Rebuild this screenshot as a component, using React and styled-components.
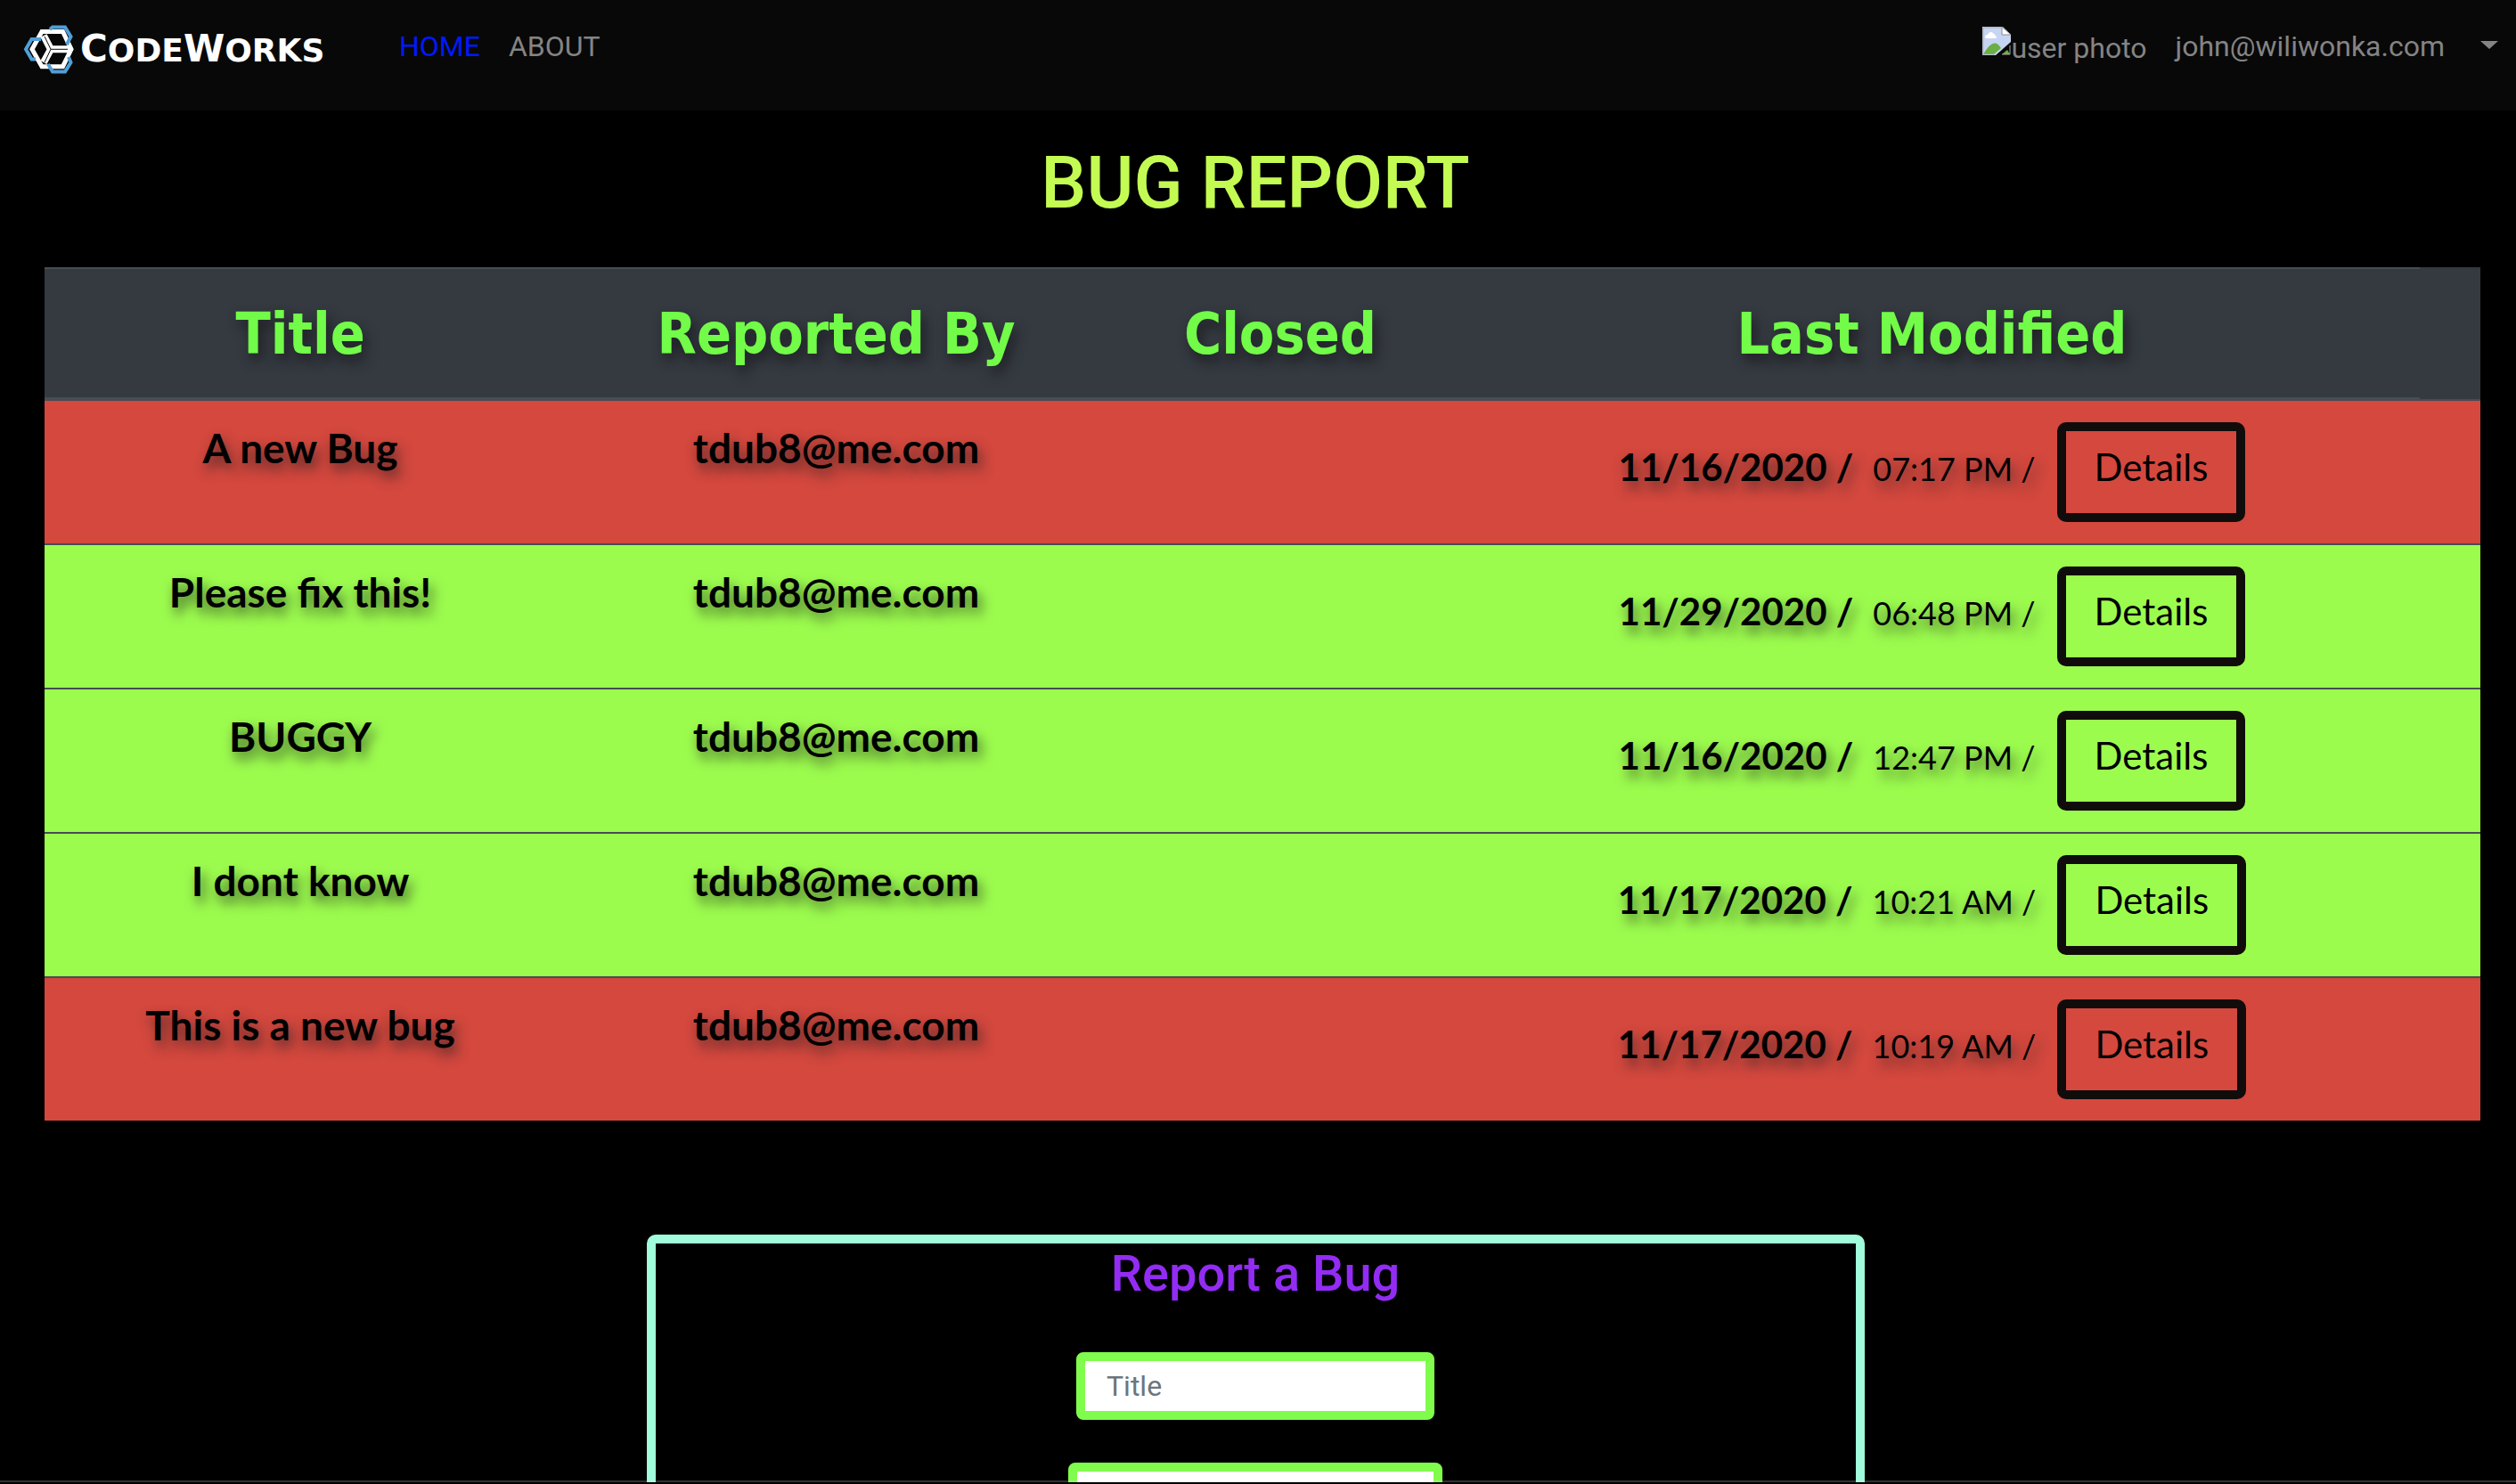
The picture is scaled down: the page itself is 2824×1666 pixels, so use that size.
import React from 'react';
import styled, { createGlobalStyle } from 'styled-components';

const GlobalStyle = createGlobalStyle`
  *, *::before, *::after { box-sizing: border-box; }
  html, body { margin: 0; background: #000; }
  body {
    font-family: Roboto, "Liberation Sans", sans-serif;
    font-size: 32px;
    line-height: 48px;
    color: #000;
  }
`;

const Page = styled.div`
  display: flex;
  flex-direction: column;
  height: 100vh;
  overflow: hidden;
`;

const Navbar = styled.nav`
  display: flex;
  flex: none;
  align-items: flex-start;
  height: 124px;
  padding: 28px 20px 0 26px;
  background: #080808;
`;

const Brand = styled.a`
  display: flex;
  align-items: center;
  gap: 6px;
  width: 422px;
  height: 56px;
  color: #fff;
  text-decoration: none;
  font: bold 36px/56px "DejaVu Sans", sans-serif;
`;

const BrandInitial = styled.span`
  font-size: 42px;
`;

const NavLink = styled.a`
  margin-right: 32px;
  color: ${(p) => (p.$active ? '#0019ff' : '#848484')};
  text-decoration: none;
`;

const UserMenu = styled.button`
  display: flex;
  align-items: flex-start;
  margin-left: auto;
  padding: 0;
  border: 0;
  background: none;
  color: #848484;
  font: inherit;
`;

const Photo = styled.span`
  display: flex;
  margin: 2px 32px 0 0;
`;

const Caret = styled.span`
  margin: 18px 0 0 40px;
  border: 10px solid transparent;
  border-top: 9px solid #848484;
  border-bottom: 0;
`;

const Section = styled.section`
  flex: none;
  margin: 0 48px 0 42px;
  text-align: center;
`;

const PageTitle = styled.h1`
  margin: 34px 0 46px;
  color: #c3fb53;
  font-size: 81px;
  font-weight: 500;
  line-height: 96px;
`;

const TableArea = styled.div`
  flex: none;
  margin: 0 40px 128px 50px;
`;

const Table = styled.table`
  width: 100%;
  table-layout: fixed;
  border-collapse: separate;
  border-spacing: 0;
  text-align: center;
`;

const Col = styled.col`
  width: ${(p) => p.$width};
`;

const HeadCell = styled.th`
  height: 148px;
  padding: 2px 0 0;
  border: solid #454d55;
  border-width: 2px 0;
  background: #343a40;
  color: #72fb48;
  font: bold 64px/96px "DejaVu Sans Condensed", "DejaVu Sans", sans-serif;
  text-shadow: 4px 8px 14px rgba(28, 28, 32, 0.9);
`;

const HeadSpacer = styled.td`
  padding: 0;
  background: #343a40;
`;

const Row = styled.tr`
  background: ${(p) => (p.$closed ? '#d4483e' : '#9cfc4e')};
`;

const Cell = styled.td`
  padding: 24px 0;
  border-top: 2px solid #454d55;
  font: bold 46px/58px Papyrus, Lato, sans-serif;
  text-shadow: 4px 8px 14px rgba(28, 28, 32, 0.7);
  vertical-align: top;
`;

const Modified = styled.div`
  display: flex;
  align-items: baseline;
  justify-content: center;
`;

const Stamp = styled.span`
  font-size: 42px;
`;

const Time = styled.span`
  margin: 0 24px 0 22px;
  font-size: 36px;
  font-weight: 400;
`;

const DetailsButton = styled.button`
  height: 112px;
  padding: 0 32px 12px;
  border: 10px solid #100c0b;
  border-radius: 10px;
  background: none;
  color: #000;
  font: 400 42px/64px Papyrus, Lato, sans-serif;
`;

const ReportForm = styled.form`
  display: flex;
  flex-direction: column;
  align-items: center;
  width: 50%;
  margin: 0 auto;
  padding-bottom: 48px;
  border: 10px solid #a0fcda;
  border-radius: 10px;
`;

const FormTitle = styled.h2`
  margin: 0 0 54px;
  color: #922cf3;
  font-size: 56px;
  font-weight: 500;
  line-height: 68px;
`;

const Field = styled.input`
  width: ${(p) => p.$width};
  height: 76px;
  margin: 0 0 48px;
  padding: 0 24px;
  border: 10px solid #80fc4c;
  border-radius: 8px;
  background: #fff;
  font: inherit;

  &::placeholder { color: #6c757d; opacity: 1; }
`;

const BottomEdge = styled.div`
  position: fixed;
  inset: auto 0 0;
  height: 4px;
  border-top: 2px solid rgba(255, 255, 255, 0.2);
  background: #000;
  background-clip: padding-box;
`;

const LogoMark = () => (
  <svg width="58" height="58" viewBox="0 0 58 58" fill="none" aria-hidden="true">
    <path d="M21 8.5H44.5L54 28.3 44.5 47.7H21L10 28.3Z" stroke="#fff" strokeWidth="5" />
    <path d="M23 13 31 28.3 23 43M31 28.3H52" stroke="#fff" strokeWidth="8" />
    <path d="M24 14 31 28.3 24 43M31 28.3H50" stroke="#080808" strokeWidth="1" />
    <g stroke="#519fd6" strokeWidth="4">
      <path d="M30 6 33 3.5H47L53.5 14 49 23" />
      <path d="M20 17H9.5L3 28.3 9.5 39.5H14" />
      <path d="M28 45 33 53.5H47L53.5 43 51 37" />
    </g>
  </svg>
);

const BrokenImage = () => (
  <svg width="32" height="32" viewBox="0 0 32 32" aria-hidden="true">
    <path d="M0 0H23L32 9V17L15 32H0Z" fill="#c6d5f3" />
    <path d="M3 12Q3 9 6 9Q8 4 12 7Q15 9 16 13H4Z" fill="#fff" />
    <path d="M1 31Q13 10 21 24L13 31ZM22 31 28 26 31 31Z" fill="#6aae46" />
    <path d="M22 0V9H32Z" fill="#fff" stroke="#8c8c8c" />
    <path d="M1 32V1H23M0 31H14M22 31H31V21" fill="none" stroke="#a8a8a8" />
  </svg>
);

const bugs = [
  { title: 'A new Bug', date: '11/16/2020', time: '07:17 PM', closed: true },
  { title: 'Please fix this!', date: '11/29/2020', time: '06:48 PM' },
  { title: 'BUGGY', date: '11/16/2020', time: '12:47 PM' },
  { title: 'I dont know', date: '11/17/2020', time: '10:21 AM' },
  { title: 'This is a new bug', date: '11/17/2020', time: '10:19 AM', closed: true },
];

export default function App() {
  return (
    <Page>
      <GlobalStyle />
      <Navbar>
        <Brand href="#home">
          <LogoMark />
          <span>
            <BrandInitial>C</BrandInitial>ODE<BrandInitial>W</BrandInitial>ORKS
          </span>
        </Brand>
        <NavLink href="#home" $active>HOME</NavLink>
        <NavLink href="#about">ABOUT</NavLink>
        <UserMenu type="button">
          <Photo><BrokenImage />user photo</Photo>
          john@wiliwonka.com
          <Caret />
        </UserMenu>
      </Navbar>
      <Section>
        <PageTitle>BUG REPORT</PageTitle>
      </Section>
      <TableArea>
        <Table>
          <colgroup>
            <Col $width="21%" />
            <Col $width="23%" />
            <Col $width="368px" />
            <Col />
            <Col $width="68px" />
          </colgroup>
          <thead>
            <tr>
              <HeadCell>Title</HeadCell>
              <HeadCell>Reported By</HeadCell>
              <HeadCell>Closed</HeadCell>
              <HeadCell>Last Modified</HeadCell>
              <HeadSpacer />
            </tr>
          </thead>
          <tbody>
            {bugs.map((bug) => (
              <Row key={bug.title} $closed={bug.closed}>
                <Cell>{bug.title}</Cell>
                <Cell>tdub8@me.com</Cell>
                <Cell />
                <Cell>
                  <Modified>
                    <Stamp>{bug.date} /</Stamp>
                    <Time>{bug.time} /</Time>
                    <DetailsButton type="button">Details</DetailsButton>
                  </Modified>
                </Cell>
                <Cell />
              </Row>
            ))}
          </tbody>
        </Table>
      </TableArea>
      <Section>
        <ReportForm>
          <FormTitle>Report a Bug</FormTitle>
          <Field $width="402px" placeholder="Title" aria-label="Title" />
          <Field $width="420px" aria-label="Description" />
        </ReportForm>
      </Section>
      <BottomEdge />
    </Page>
  );
}
